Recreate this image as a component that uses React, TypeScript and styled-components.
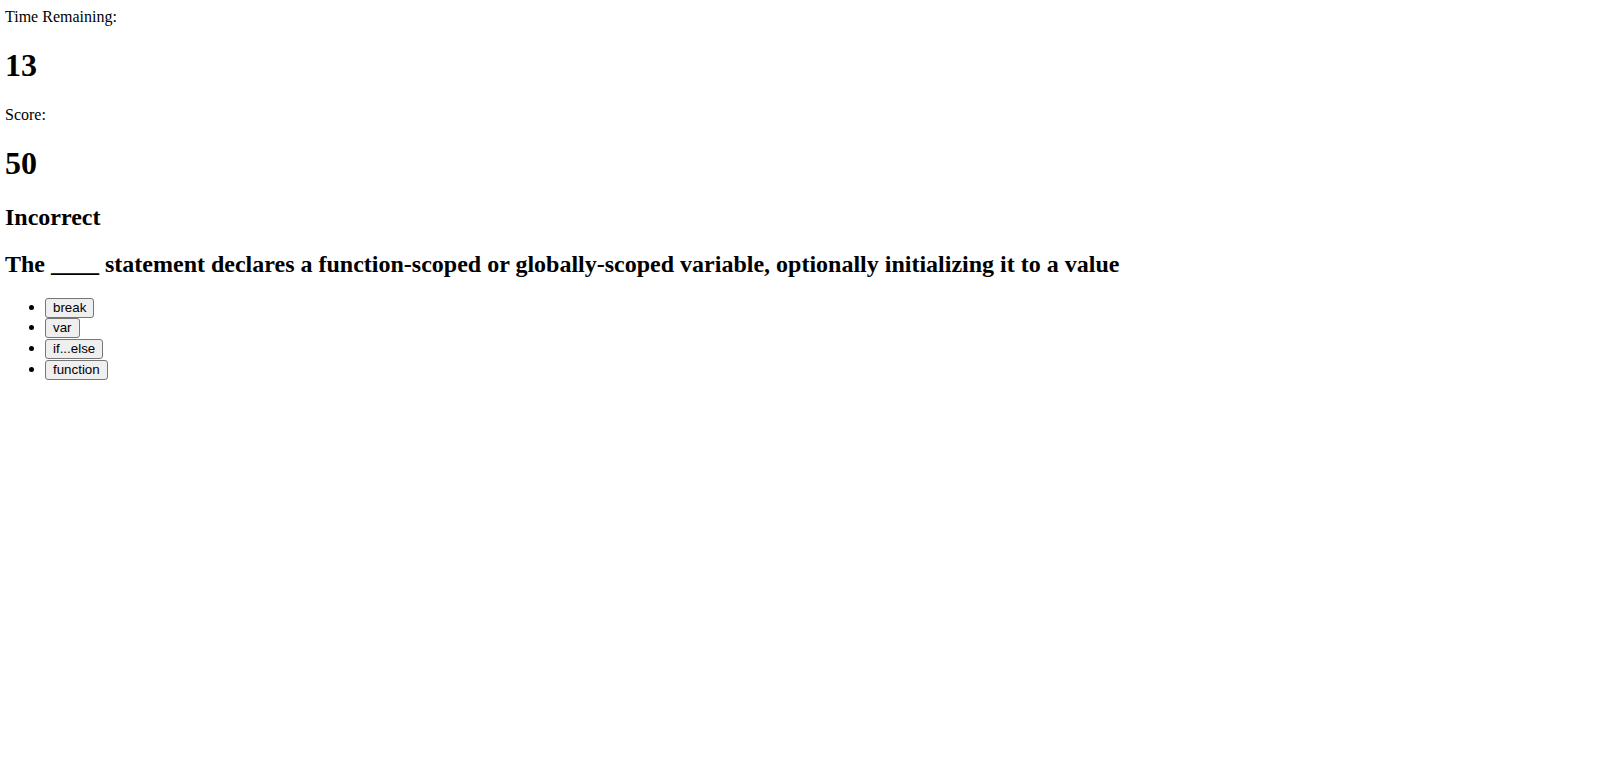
import React from "react";
import styled, { createGlobalStyle } from "styled-components";

const GlobalStyle = createGlobalStyle`
  body {
    margin: 8px 5px;
    font-family: "Liberation Serif", "Times New Roman", serif;
    font-size: 16px;
    color: #000;
    background: #fff;
  }
`;

const Label = styled.div`
  font-size: 16px;
`;

const BigNumber = styled.h1`
  font-size: 32px;
  font-weight: bold;
  margin: 21.44px 0;
`;

const Heading = styled.h2`
  font-size: 24px;
  font-weight: bold;
  margin: 19.92px 0;
`;

const Choices = styled.ul`
  margin: 16px 0;
  padding-left: 40px;
  list-style: disc;
`;

const Choice = styled.li`
  height: 20.7px;
`;

const ChoiceButton = styled.button`
  font-family: "Liberation Sans", Arial, sans-serif;
  font-size: 13.3333px;
  line-height: 15px;
  color: #000;
  background: #efefef;
  border: 1px solid #767676;
  border-radius: 3px;
  padding: 1px 7px 2px;
  cursor: pointer;
`;

const choices = ["break", "var", "if...else", "function"];

export default function App() {
  return (
    <>
      <GlobalStyle />
      <Label>Time Remaining:</Label>
      <BigNumber>13</BigNumber>
      <Label>Score:</Label>
      <BigNumber>50</BigNumber>
      <Heading>Incorrect</Heading>
      <Heading>
        The ____ statement declares a function-scoped or globally-scoped variable, optionally initializing it to a value
      </Heading>
      <Choices>
        {choices.map((c) => (
          <Choice key={c}>
            <ChoiceButton>{c}</ChoiceButton>
          </Choice>
        ))}
      </Choices>
    </>
  );
}
